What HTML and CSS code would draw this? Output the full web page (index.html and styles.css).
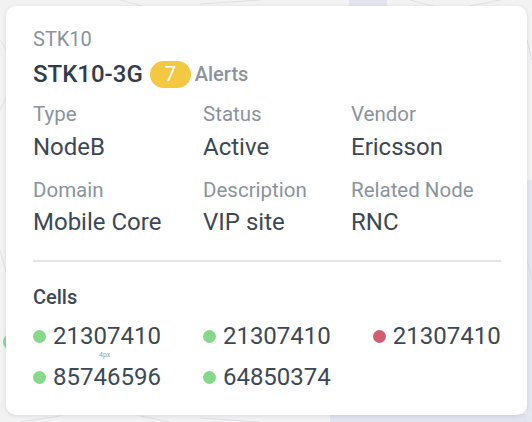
FILE: index.html
```html
<!DOCTYPE html>
<html lang="en">
<head>
    <meta charset="UTF-8">
    <meta name="viewport" content="width=device-width, initial-scale=1.0">
    <title>STK10-3G</title>
    <link rel="stylesheet" href="styles.css">
</head>
<body>
    <svg class="map" width="532" height="422" viewBox="0 0 532 422">
        <rect x="349" y="0" width="38" height="8" fill="#e1e4ee"/>
        <rect x="330" y="414" width="202" height="8" fill="#e1e4ee"/>
        <rect x="527" y="180" width="5" height="242" fill="#e4e6ef"/>
        <path d="M0 40 L20 70 L0 110" stroke="#e2e2e4" fill="none"/>
        <path d="M0 250 L14 300" stroke="#e2e2e4" fill="none"/>
        <path d="M120 0 L150 8 M200 4 L260 0 M410 0 L440 8 M470 6 L500 0" stroke="#e0e0e2" fill="none"/>
        <path d="M20 422 L60 416 M140 416 L170 422 M200 418 L260 422" stroke="#dedee0" fill="none"/>
        <path d="M527 40 L532 60 M527 260 L532 280" stroke="#dcdce0" fill="none"/>
        <circle cx="12" cy="342" r="9" fill="#86d98a"/>
    </svg>

    <div class="card">
        <div class="site">STK10</div>
        <div class="title-row">
            <span class="title">STK10-3G</span>
            <span class="badge">7</span>
            <span class="alerts">Alerts</span>
        </div>

        <div class="props">
            <div class="prop">
                <div class="label">Type</div>
                <div class="value">NodeB</div>
            </div>
            <div class="prop">
                <div class="label">Status</div>
                <div class="value">Active</div>
            </div>
            <div class="prop">
                <div class="label">Vendor</div>
                <div class="value">Ericsson</div>
            </div>
            <div class="prop">
                <div class="label">Domain</div>
                <div class="value">Mobile Core</div>
            </div>
            <div class="prop">
                <div class="label">Description</div>
                <div class="value">VIP site</div>
            </div>
            <div class="prop">
                <div class="label">Related Node</div>
                <div class="value">RNC</div>
            </div>
        </div>

        <hr class="divider">

        <div class="cells-title">Cells</div>
        <div class="cells">
            <div class="cell"><span class="dot ok"></span>21307410</div>
            <div class="cell"><span class="dot ok"></span>21307410</div>
            <div class="cell"><span class="dot down"></span>21307410</div>
            <div class="cell"><span class="dot ok"></span>85746596</div>
            <div class="cell"><span class="dot ok"></span>64850374</div>
            <span class="gap-note">4px</span>
        </div>
    </div>
</body>
</html>
```

FILE: styles.css
```css
body {
    margin: 0;
    padding: 6px;
    width: 532px;
    height: 422px;
    box-sizing: border-box;
    background-color: #f2f2f3;
    font-family: Roboto, "Liberation Sans", sans-serif;
    position: relative;
    overflow: hidden;
}

.map {
    position: absolute;
    left: 0;
    top: 0;
}

.card {
    position: relative;
    width: 521px;
    height: 409px;
    box-sizing: border-box;
    padding: 21px 26px 0 27px;
    background-color: #fff;
    border-radius: 10px;
    box-shadow: 0 1px 4px rgba(40, 50, 80, 0.12);
}

.site {
    font-size: 20px;
    line-height: 24px;
    color: #8a939e;
}

.title-row {
    display: flex;
    align-items: center;
    margin-top: 7.3px;
    height: 32px;
}

.title {
    font-size: 24px;
    font-weight: 500;
    color: #323d4a;
}

.badge {
    margin-left: 7px;
    width: 41px;
    height: 27px;
    border-radius: 14px;
    background-color: #f5c842;
    color: #fff;
    font-size: 20px;
    display: flex;
    align-items: center;
    justify-content: center;
}

.alerts {
    margin-left: 4px;
    font-size: 20px;
    font-weight: 500;
    color: #8a939e;
}

.props {
    display: grid;
    grid-template-columns: 170px 148px auto;
    row-gap: 13.2px;
    margin-top: 10.2px;
}

.label {
    font-size: 20.5px;
    line-height: 28px;
    color: #8a939e;
}

.value {
    margin-top: 2.1px;
    font-size: 24px;
    line-height: 32px;
    color: #3d4855;
}

.divider {
    margin: 21.9px 0 0;
    border: none;
    height: 2px;
    background-color: #e1e5ea;
}

.cells-title {
    margin-top: 21px;
    font-size: 20px;
    font-weight: 500;
    line-height: 28px;
    color: #3d4855;
}

.cells {
    position: relative;
    display: flex;
    flex-wrap: wrap;
    column-gap: 42px;
    row-gap: 4px;
    margin-top: 7.7px;
}

.cell {
    display: flex;
    align-items: center;
    gap: 7px;
    font-size: 24px;
    line-height: 37px;
    color: #3d4855;
}

.dot {
    width: 13px;
    height: 13px;
    border-radius: 50%;
}

.ok {
    background-color: #86d98a;
}

.down {
    background-color: #d25d72;
}

.gap-note {
    position: absolute;
    left: 66px;
    top: 33px;
    font-size: 7px;
    color: #9aa1aa;
}
```
